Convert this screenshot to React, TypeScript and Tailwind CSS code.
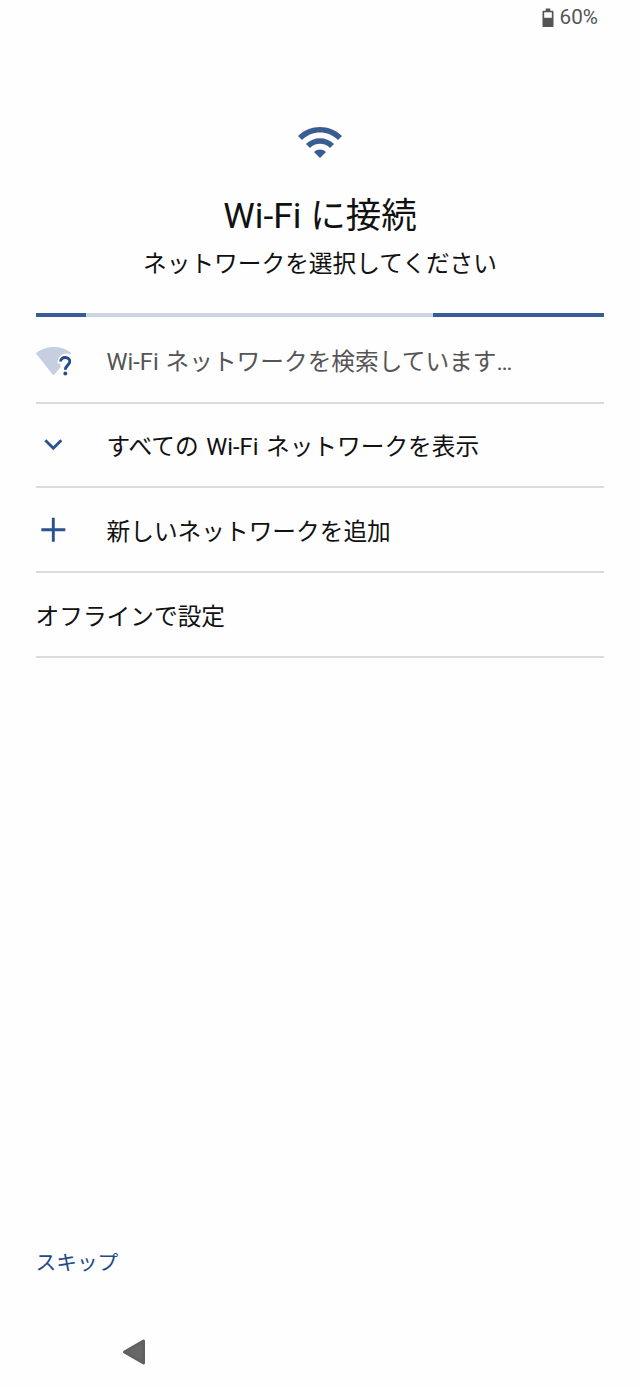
import type { ReactNode } from 'react';

function BatteryIcon() {
  return (
    <svg className="h-[20px] w-[12px]" viewBox="0 0 12 20">
      <path d="M3.7 0.5h4.6v2.2h2.2c.6 0 1 .4 1 1v14.3c0 .6-.4 1-1 1h-9c-.6 0-1-.4-1-1V3.7c0-.6.4-1 1-1h2.2z" fill="#555555" />
      <path d="M2.2 4.3h7.6v5.5H2.2z" fill="#ffffff" />
    </svg>
  );
}

function WifiIcon() {
  return (
    <svg className="h-12 w-12" viewBox="0 0 24 24" fill="#385d94">
      <path d="M1 9l2 2c4.97-4.97 13.03-4.97 18 0l2-2C16.93 2.93 7.08 2.93 1 9zm8 8l3 3 3-3c-1.65-1.66-4.34-1.66-6 0zm-4-4l2 2c2.76-2.76 7.24-2.76 10 0l2-2C15.14 9.14 8.87 9.14 5 13z" />
    </svg>
  );
}

function WifiUnknownIcon() {
  return (
    <svg className="h-[36px] w-[36px]" viewBox="0 0 36 36" fill="none">
      <path d="M-0.3 11.2C10 3.2 25.5 3 35.2 11L34.2 12.4C27 9.6 21.2 14.5 21.6 21.6H24.4V25.4L18.2 32.5Q17.4 33.3 16.6 32.5Z" fill="#c6cfdf" />
      <path d="M24.6 19.6C24.6 17.1 26.6 15.5 29.2 15.5C31.9 15.5 33.8 17.2 33.8 19.6C33.8 23 29.3 23.4 29.3 27.8" stroke="#234a8a" strokeWidth="2.8" />
      <circle cx="29.3" cy="31.5" r="1.9" fill="#234a8a" />
    </svg>
  );
}

function ChevronIcon() {
  return (
    <svg className="h-[36px] w-[36px]" viewBox="0 0 36 36" fill="none">
      <path d="M9.3 13.3L17.3 21.2L25.3 13.3" stroke="#2a5190" strokeWidth="2.9" />
    </svg>
  );
}

function PlusIcon() {
  return (
    <svg className="h-[36px] w-[36px]" viewBox="0 0 36 36" fill="none">
      <path d="M17.3 5.8v24M5.3 17.8h24" stroke="#2a5190" strokeWidth="2.9" />
    </svg>
  );
}

interface RowProps {
  icon?: ReactNode;
  label: string;
  muted?: boolean;
}

function Row({ icon, label, muted }: RowProps) {
  return (
    <li className="flex h-[84.7px] items-center border-b-2 border-[#dcdcdc]">
      {icon && <span className="mr-[35px] shrink-0">{icon}</span>}
      <span className={muted ? 'pt-[5px] text-[#555555] [word-spacing:1px]' : 'pt-[6px] text-[#111111] [word-spacing:1.7px]'}>
        {label}
      </span>
    </li>
  );
}

export default function App() {
  return (
    <div className="flex h-[1387px] w-[640px] flex-col bg-[#fefefe] font-[Roboto,'Noto_Sans_CJK_JP',sans-serif] text-[23.7px] text-[#111111]">
      {/* Status bar */}
      <div className="flex h-[35px] items-center justify-end gap-[6px] pr-[42px] text-[20.7px] text-[#555555]">
        <BatteryIcon />
        <span>60%</span>
      </div>

      {/* Header */}
      <header className="flex h-[278px] flex-col items-center pt-[83px]">
        <WifiIcon />
        <h1 className="mt-[24px] text-[35.5px] leading-[52px]">Wi-Fi に接続</h1>
        <p className="mt-[5px] leading-[35px]">ネットワークを選択してください</p>
      </header>

      <main className="mr-[36px] ml-[35.5px] flex-1">
        {/* Scanning progress */}
        <div className="flex h-[4px] bg-[#cdd5e3]">
          <div className="w-[50px] bg-[#385d94]" />
          <div className="ml-auto w-[171px] bg-[#385d94]" />
        </div>

        <ul className="mt-[2px]">
          <Row icon={<WifiUnknownIcon />} label="Wi-Fi ネットワークを検索しています…" muted />
          <Row icon={<ChevronIcon />} label="すべての Wi-Fi ネットワークを表示" />
          <Row icon={<PlusIcon />} label="新しいネットワークを追加" />
          <Row label="オフラインで設定" />
        </ul>
      </main>

      <footer className="h-[146px] px-[35.5px]">
        <button className="block text-[20.7px] leading-[44px] text-[#234a8a]">スキップ</button>
        <svg className="mt-[53px] ml-[86.5px] h-[28px] w-[25px]" viewBox="0 0 25 28">
          <path d="M2.5 14L21.5 3V25Z" fill="#686868" stroke="#606060" strokeWidth="3" strokeLinejoin="round" />
        </svg>
      </footer>
    </div>
  );
}
